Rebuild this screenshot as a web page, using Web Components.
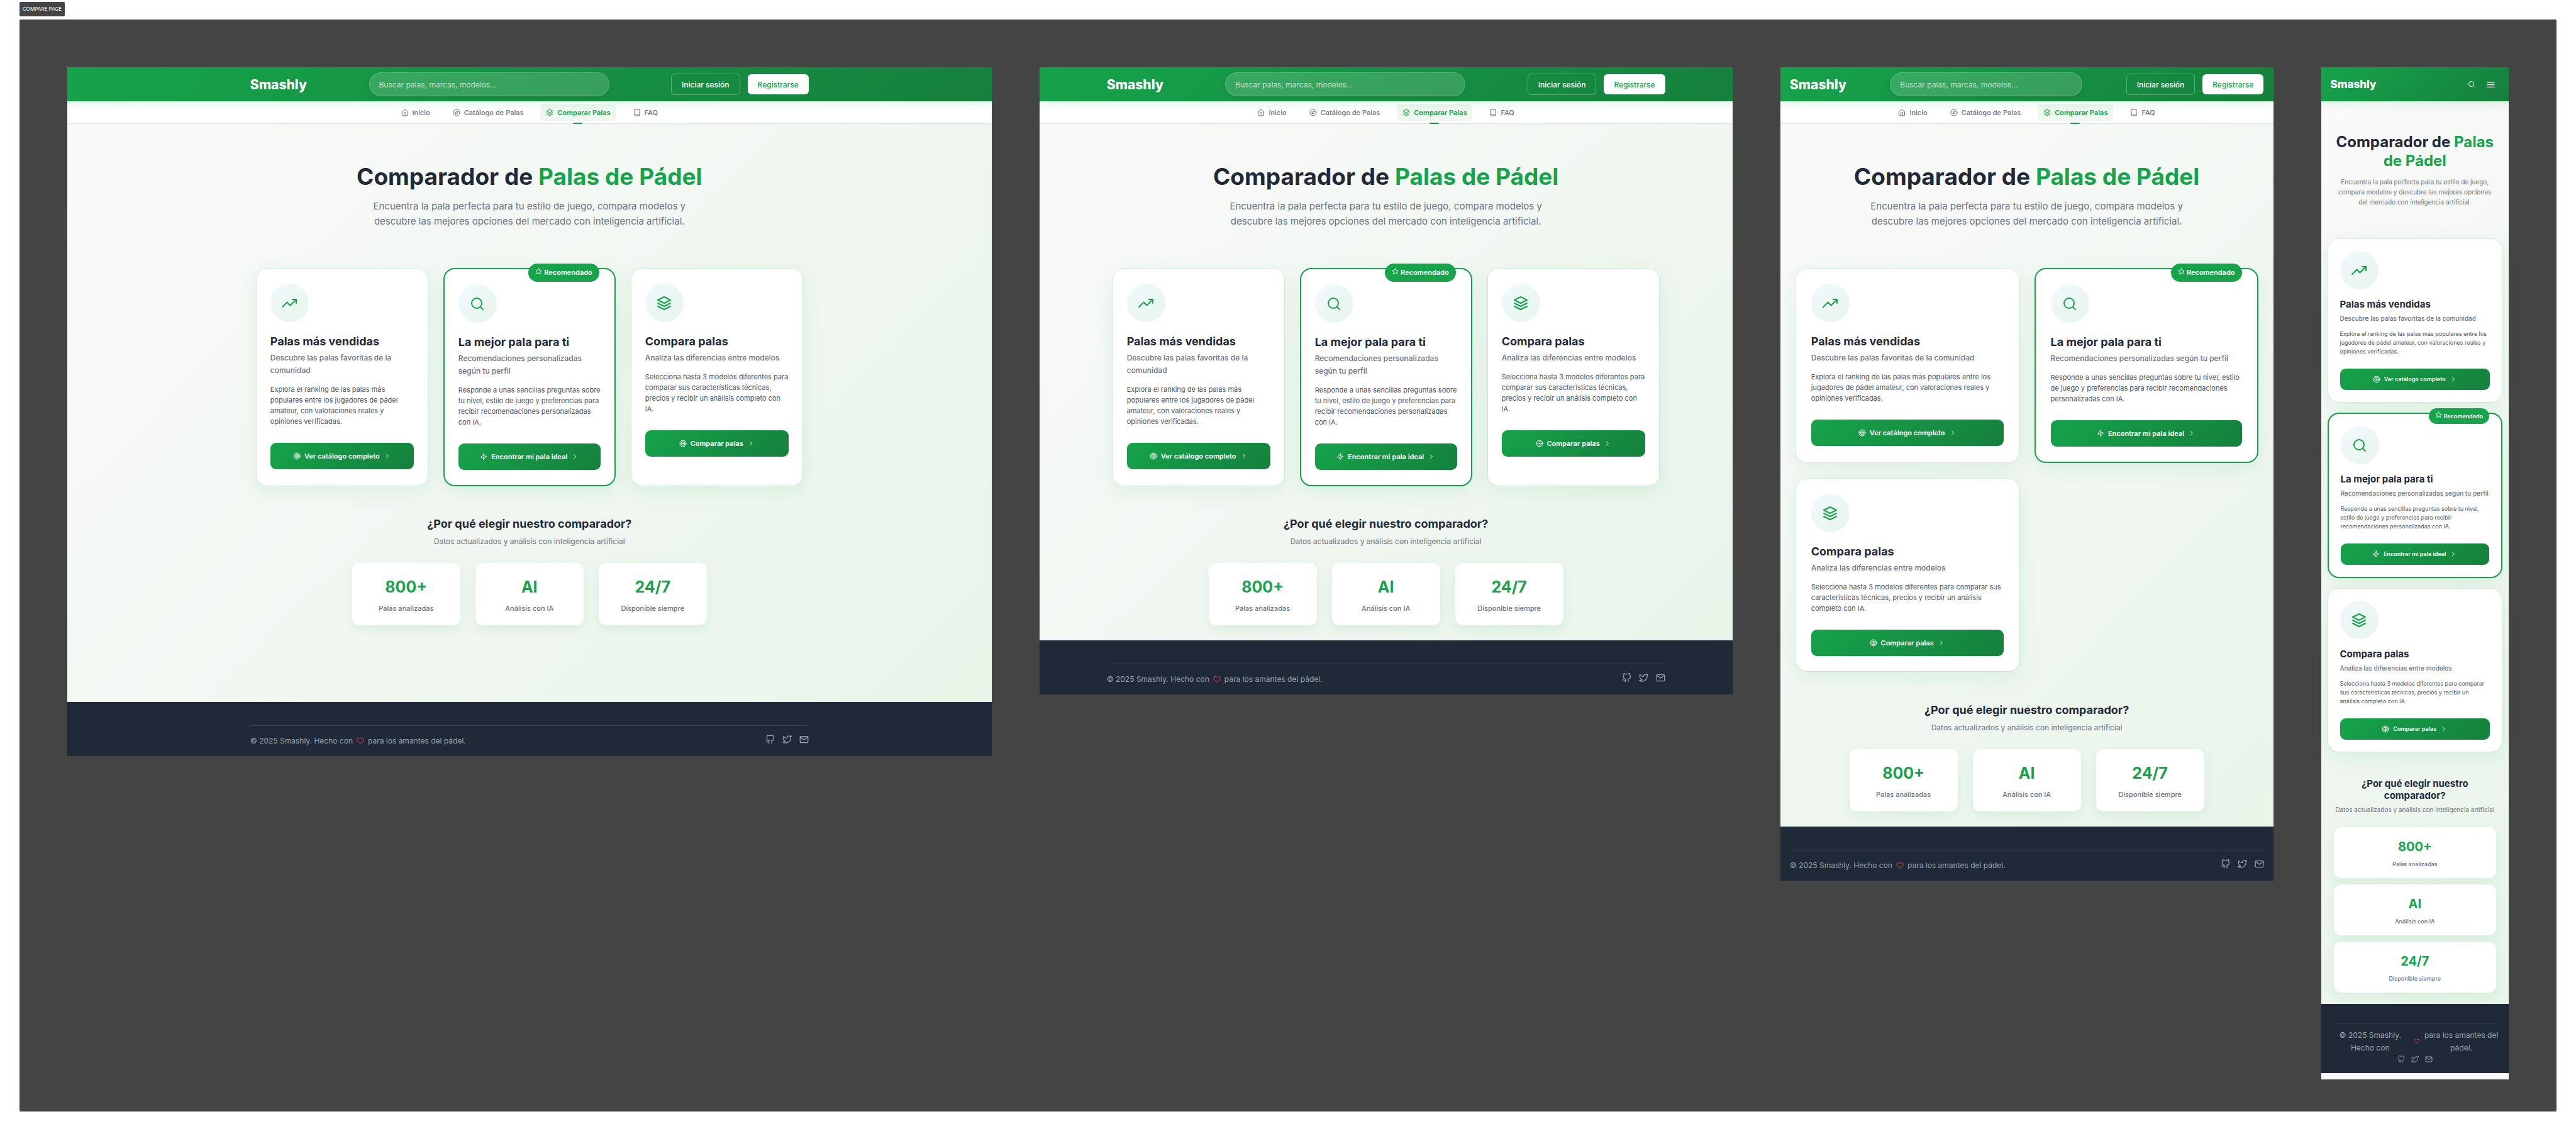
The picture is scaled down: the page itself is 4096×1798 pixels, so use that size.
<!DOCTYPE html>
<html lang="es">
<head>
<meta charset="utf-8">
<title>Smashly · Compare page</title>
<style>
  html { height: 100%; }
  body {
    margin: 0;
    min-height: 100%;
    box-sizing: border-box;
    padding: 3px 31px 31px;
    display: flex;
    flex-direction: column;
    align-items: flex-start;
    gap: 5px;
    background: #fff;
    font-family: Inter, "Liberation Sans", sans-serif;
  }
  compare-board { align-self: stretch; flex: 1; }
  smashly-screen.desktop { flex: 1920 1 0; }
  smashly-screen.laptop { flex: 1440 1 0; }
  smashly-screen.tablet { flex: 1024 1 0; }
  smashly-screen.mobile { flex: 390 1 0; }
</style>
</head>
<body>
<board-label>Compare page</board-label>
<compare-board>
  <smashly-screen class="desktop"></smashly-screen>
  <smashly-screen class="laptop"></smashly-screen>
  <smashly-screen class="tablet"></smashly-screen>
  <smashly-screen class="mobile"></smashly-screen>
</compare-board>

<script>
const define = (name, markup, extra) => {
  const template = document.createElement('template');
  template.innerHTML = markup;
  customElements.define(name, class extends HTMLElement {
    constructor() {
      super();
      this.attachShadow({ mode: 'open' }).append(template.content.cloneNode(true));
    }
    connectedCallback() { if (extra) extra(this, this.shadowRoot); }
  });
};

/* 24×24 stroke icons */
const ICONS = {
  home: '<path d="M3 9l9-7 9 7v11a2 2 0 0 1-2 2H5a2 2 0 0 1-2-2z"/><polyline points="9 22 9 12 15 12 15 22"/>',
  compass: '<circle cx="12" cy="12" r="10"/><polygon points="16.24 7.76 14.12 14.12 7.76 16.24 9.88 9.88 16.24 7.76"/>',
  layers: '<polygon points="12 2 2 7 12 12 22 7 12 2"/><polyline points="2 17 12 22 22 17"/><polyline points="2 12 12 17 22 12"/>',
  book: '<path d="M4 19.5A2.5 2.5 0 0 1 6.5 17H20"/><path d="M6.5 2H20v20H6.5A2.5 2.5 0 0 1 4 19.5v-15A2.5 2.5 0 0 1 6.5 2z"/>',
  search: '<circle cx="11" cy="11" r="8"/><line x1="21" y1="21" x2="16.65" y2="16.65"/>',
  menu: '<line x1="3" y1="12" x2="21" y2="12"/><line x1="3" y1="6" x2="21" y2="6"/><line x1="3" y1="18" x2="21" y2="18"/>',
  trending: '<polyline points="23 6 13.5 15.5 8.5 10.5 1 18"/><polyline points="17 6 23 6 23 12"/>',
  target: '<circle cx="12" cy="12" r="10"/><circle cx="12" cy="12" r="6"/><circle cx="12" cy="12" r="2"/>',
  zap: '<polygon points="13 2 3 14 12 14 11 22 21 10 12 10 13 2"/>',
  star: '<polygon points="12 2 15.09 8.26 22 9.27 17 14.14 18.18 21.02 12 17.77 5.82 21.02 7 14.14 2 9.27 8.91 8.26 12 2"/>',
  chevron: '<polyline points="9 18 15 12 9 6"/>',
  heart: '<path d="M20.84 4.61a5.5 5.5 0 0 0-7.78 0L12 5.67l-1.06-1.06a5.5 5.5 0 0 0-7.78 7.78l1.06 1.06L12 21.23l7.78-7.78 1.06-1.06a5.5 5.5 0 0 0 0-7.78z"/>',
  github: '<path d="M9 19c-5 1.5-5-2.5-7-3m14 6v-3.87a3.37 3.37 0 0 0-.94-2.61c3.14-.35 6.44-1.54 6.44-7A5.44 5.44 0 0 0 20 4.77 5.07 5.07 0 0 0 19.91 1S18.73.65 16 2.48a13.38 13.38 0 0 0-7 0C6.27.65 5.09 1 5.09 1A5.07 5.07 0 0 0 5 4.77a5.44 5.44 0 0 0-1.5 3.78c0 5.42 3.3 6.61 6.44 7A3.37 3.37 0 0 0 9 18.13V22"/>',
  twitter: '<path d="M23 3a10.9 10.9 0 0 1-3.14 1.53 4.48 4.48 0 0 0-7.86 3v1A10.66 10.66 0 0 1 3 4s-4 9 5 13a11.64 11.64 0 0 1-7 2c9 5 20 0 20-11.5a4.5 4.5 0 0 0-.08-.83A7.72 7.72 0 0 0 23 3z"/>',
  mail: '<path d="M4 4h16c1.1 0 2 .9 2 2v12c0 1.1-.9 2-2 2H4c-1.1 0-2-.9-2-2V6c0-1.1.9-2 2-2z"/><polyline points="22,6 12,13 2,6"/>',
};

define('ui-icon', `
<style>
  :host { display: inline-block; width: 12px; min-width: 0; line-height: 0; }
  svg { display: block; width: 100%; height: auto; fill: none; stroke: currentColor; stroke-width: 2; stroke-linecap: round; stroke-linejoin: round; overflow: visible; }
</style>
<svg viewBox="0 0 24 24" aria-hidden="true"></svg>`,
(host, root) => { root.querySelector('svg').innerHTML = ICONS[host.getAttribute('name')] || ''; });

define('board-label', `
<style>
  :host {
    display: block; background: #444; color: #fff; border-radius: 2px;
    padding: 0 5px; font-size: 8px; line-height: 23px; text-transform: uppercase;
  }
</style>
<slot></slot>`);

define('compare-board', `
<style>
  :host {
    display: flex; align-items: flex-start; gap: 76px;
    box-sizing: border-box; padding: 76px; padding-bottom: 51px;
    background: #444; border-radius: 2px;
  }
</style>
<slot></slot>`);

define('smashly-header', `
<style>
  :host {
    display: block; position: relative; z-index: 2; color: #fff;
    background: linear-gradient(135deg, #16a34a 0%, #15803d 100%);
    box-shadow: 0 3px 15px rgba(22, 163, 74, .15);
  }
  .bar {
    box-sizing: border-box; max-width: 918px; height: 54px; margin: 0 auto; padding: 0 15px;
    display: flex; align-items: center; justify-content: space-between;
  }
  .logo { color: inherit; text-decoration: none; font-size: 21px; line-height: 27px; font-weight: 800; }
  input {
    box-sizing: border-box; display: block; width: 382px; height: 38px; margin: 0; padding: 0 15px;
    border: 1px solid rgba(255, 255, 255, .2); border-radius: 19px;
    background: rgba(255, 255, 255, .15); color: #fff; font: 12px/15px Inter, "Liberation Sans", sans-serif;
    box-shadow: 0 2px 8px rgba(0, 0, 0, .1);
  }
  input::placeholder { color: rgba(255, 255, 255, .7); opacity: 1; }
  .actions, .tools { display: flex; align-items: center; gap: 12px; }
  .tools { display: none; gap: 5px; }
  button { margin: 0; border: 0; background: none; color: inherit; font: 500 12px/15px Inter, "Liberation Sans", sans-serif; }
  .actions button { box-sizing: border-box; height: 32px; padding: 0 16px; border-radius: 6px; }
  .actions .ghost { height: 34px; border: 1px solid rgba(255, 255, 255, .3); }
  .actions .solid { background: #fff; color: #16a34a; }
  .tools button { display: flex; padding: 6px; }
  .menu ui-icon { width: 15px; }
  @container (max-width: 900px) { input { width: 306px; } }
  @container (max-width: 500px) {
    form, .actions { display: none; }
    .tools { display: flex; }
    .logo { font-size: 17px; line-height: 21px; }
  }
</style>
<header class="bar">
  <a class="logo" href="#">Smashly</a>
  <form role="search"><input type="search" aria-label="Buscar palas" placeholder="Buscar palas, marcas, modelos..."></form>
  <div class="actions"><button class="ghost" type="button">Iniciar sesión</button><button class="solid" type="button">Registrarse</button></div>
  <div class="tools">
    <button type="button" aria-label="Buscar"><ui-icon name="search"></ui-icon></button>
    <button class="menu" type="button" aria-label="Menú"><ui-icon name="menu"></ui-icon></button>
  </div>
</header>`);

define('smashly-nav', `
<style>
  :host { display: block; position: relative; z-index: 1; background: #fff; border-bottom: 1px solid #e5e7eb; box-shadow: 0 1px 2px rgba(0, 0, 0, .04); }
  nav { display: flex; justify-content: center; gap: 18px; padding: 5px 0 4px; }
  a {
    position: relative; display: flex; align-items: center; gap: 6px; padding: 6px 9px; border-radius: 5px;
    color: #6b7280; text-decoration: none; font-size: 11px; line-height: 14px; font-weight: 500;
  }
  a.active { color: #16a34a; font-weight: 600; background: #eff8f0; }
  a.active::after {
    content: ""; position: absolute; left: 50%; bottom: -5px; width: 15px; height: 2px; margin-left: -8px;
    background: #16a34a; border-radius: 1px;
  }
  @container (max-width: 500px) { :host { display: none; } }
</style>
<nav aria-label="Principal">
  <a href="#"><ui-icon name="home"></ui-icon>Inicio</a>
  <a href="#"><ui-icon name="compass"></ui-icon>Catálogo de Palas</a>
  <a href="#" class="active" aria-current="page"><ui-icon name="layers"></ui-icon>Comparar Palas</a>
  <a href="#"><ui-icon name="book"></ui-icon>FAQ</a>
</nav>`);

define('smashly-hero', `
<style>
  :host { display: block; text-align: center; padding: 62px 24px; }
  h1 { margin: 0; color: #1f2937; font-size: 37px; line-height: 44px; font-weight: 700; }
  h1 em { font-style: normal; color: #16a34a; }
  p { margin: 13px auto 0; max-width: 536px; color: #6b7280; font-size: 15px; line-height: 24px; }
  @container (max-width: 500px) {
    :host { padding: 50px 20px; }
    h1 { font-size: 24px; line-height: 30px; }
    p { margin-top: 10px; font-size: 10px; line-height: 16px; }
  }
</style>
<h1>Comparador de <em>Palas de Pádel</em></h1>
<p>Encuentra la pala perfecta para tu estilo de juego, compara modelos y descubre las mejores opciones del mercado con inteligencia artificial.</p>`);

define('option-card', `
<style>
  :host {
    display: block; position: relative; box-sizing: border-box; min-width: 0; padding: 24px 22px;
    background: #fff; border: 1px solid rgba(22, 163, 74, .1); background-clip: padding-box; border-radius: 18px;
    box-shadow: 0 8px 31px rgba(22, 163, 74, .1);
  }
  :host([featured]) { border: 2px solid #16a34a; }
  .badge {
    display: none; position: absolute; top: -9px; right: 24px; padding: 6px 11px; border-radius: 15px;
    background: #16a34a; color: #fff; font-size: 11px; line-height: 17px; font-weight: 600;
  }
  :host([featured]) .badge { display: block; }
  .badge ui-icon { width: 11px; }
  .disc {
    width: 61px; height: 61px; border-radius: 50%; display: flex; align-items: center; justify-content: center;
    background: linear-gradient(135deg, #f0f9ff, #e8f5e9); color: #16a34a;
  }
  .disc ui-icon { width: 24px; }
  h3 { margin: 20px 0 0; color: #1f2937; font-size: 18px; line-height: 22px; font-weight: 700; }
  .lead { margin: 5px 0 0; color: #6b7280; font-size: 12px; line-height: 20px; font-weight: 500; }
  .text { margin: 12px 0 25px; color: #4b5563; font-size: 11px; line-height: 17px; }
  button {
    display: flex; align-items: center; justify-content: center; gap: 6px; width: 100%; height: 42px; margin: 0; padding: 0;
    border: 0; border-radius: 9px; background: linear-gradient(135deg, #16a34a 0%, #15803d 100%); color: #fff;
    font: 600 11px/17px Inter, "Liberation Sans", sans-serif;
  }
  @container (max-width: 900px) { :host { padding: 24px; } }
  @container (max-width: 500px) {
    :host { padding: 19px; }
    .badge { right: 19px; padding: 5px 10px; font-size: 9px; line-height: 14px; }
    h3 { margin-top: 15px; font-size: 15px; line-height: 18px; }
    .lead { font-size: 10px; line-height: 16px; }
    .text { margin: 10px 0 20px; font-size: 9px; line-height: 14px; }
    button { height: 34px; font-size: 9px; line-height: 14px; }
  }
</style>
<div class="badge"><ui-icon name="star"></ui-icon> Recomendado</div>
<div class="disc"><ui-icon class="symbol"></ui-icon></div>
<h3><slot name="title"></slot></h3>
<p class="lead"><slot name="lead"></slot></p>
<p class="text"><slot></slot></p>
<button type="button"><ui-icon class="action-icon"></ui-icon><slot name="action"></slot><ui-icon name="chevron"></ui-icon></button>`,
(host, root) => {
  for (const [cls, attr] of [['symbol', 'icon'], ['action-icon', 'action-icon']]) {
    const icon = root.querySelector('.' + cls);
    icon.setAttribute('name', host.getAttribute(attr));
    icon.connectedCallback();
  }
});

define('stat-tile', `
<style>
  :host { display: block; padding: 18px; background: #fff; border-radius: 12px; text-align: center; box-shadow: 0 6px 18px rgba(22, 163, 74, .1); }
  .value { color: #16a34a; font-size: 25px; line-height: 40px; font-weight: 700; }
  .label { margin-top: 6px; color: #6b7280; font-size: 11px; line-height: 17px; font-weight: 500; }
  @container (max-width: 500px) {
    :host { padding: 15px; }
    .value { font-size: 20px; line-height: 32px; }
    .label { margin-top: 5px; font-size: 9px; line-height: 14px; }
  }
</style>
<div class="value"><slot name="value"></slot></div>
<div class="label"><slot></slot></div>`);

define('smashly-footer', `
<style>
  :host { display: block; background: #1f2937; color: #9ca3af; font-size: 12px; line-height: 20px; }
  .inner { box-sizing: border-box; max-width: 918px; margin: 0 auto; padding: 37px 15px 0; }
  .row { display: flex; align-items: center; justify-content: space-between; padding: 14px 0; border-top: 1px solid #374151; }
  .copy { display: flex; align-items: center; gap: 6px; }
  .copy ui-icon { color: #ef4444; }
  .links { display: flex; gap: 12px; }
  .links a { color: inherit; height: 20px; }
  .links ui-icon { width: 15px; }
  @container (max-width: 500px) {
    .inner { padding-top: 30px; }
    .row { flex-direction: column; padding: 9px 0 10px; text-align: center; }
    .links { gap: 10px; }
    .links ui-icon { width: 12px; }
  }
</style>
<footer class="inner">
  <div class="row">
    <div class="copy"><span>© 2025 Smashly. Hecho con</span><ui-icon name="heart"></ui-icon><span>para los amantes del pádel.</span></div>
    <div class="links">
      <a href="#" aria-label="GitHub"><ui-icon name="github"></ui-icon></a>
      <a href="#" aria-label="Twitter"><ui-icon name="twitter"></ui-icon></a>
      <a href="#" aria-label="Correo"><ui-icon name="mail"></ui-icon></a>
    </div>
  </div>
</footer>`);

define('smashly-screen', `
<style>
  :host { display: block; min-width: 0; container-type: inline-size; background: #fafafa; }
  main { display: block; box-sizing: border-box; padding-bottom: 24px; background: linear-gradient(135deg, #fafafa 0%, #e8f5e9 100%); }
  .cards {
    box-sizing: border-box; max-width: 918px; margin: 0 auto; padding: 0 24px;
    display: grid; grid-template-columns: repeat(3, minmax(0, 1fr)); gap: 24px;
  }
  .why { padding: 48px 24px 0; text-align: center; }
  h2 { margin: 0; color: #1f2937; font-size: 18px; line-height: 24px; font-weight: 700; }
  .why p { margin: 6px 0 24px; color: #6b7280; font-size: 12px; line-height: 20px; }
  .stats { max-width: 564px; margin: 0 auto; display: grid; grid-template-columns: repeat(3, minmax(0, 1fr)); gap: 24px; }
  @container (min-width: 1400px) { main { min-height: 919px; } }
  @container (max-width: 900px) {
    .cards { grid-template-columns: repeat(2, minmax(0, 1fr)); }
    .why { padding-top: 49px; }
  }
  @container (max-width: 500px) {
    main { padding-bottom: 18px; }
    .cards { grid-template-columns: minmax(0, 1fr); padding: 0 10px; gap: 16px; }
    .why { padding: 40px 20px 0; }
    h2 { font-size: 15px; line-height: 19px; }
    .why p { margin: 5px 0 20px; font-size: 10px; line-height: 16px; }
    .stats { grid-template-columns: minmax(0, 1fr); gap: 10px; }
    smashly-footer { margin-bottom: 10px; }
  }
</style>
<smashly-header></smashly-header>
<smashly-nav></smashly-nav>
<main>
  <smashly-hero></smashly-hero>
  <section class="cards">
    <option-card icon="trending" action-icon="target">
      <span slot="title">Palas más vendidas</span>
      <span slot="lead">Descubre las palas favoritas de la comunidad</span>
      Explora el ranking de las palas más populares entre los jugadores de pádel amateur, con valoraciones reales y opiniones verificadas.
      <span slot="action">Ver catálogo completo</span>
    </option-card>
    <option-card featured icon="search" action-icon="zap">
      <span slot="title">La mejor pala para ti</span>
      <span slot="lead">Recomendaciones personalizadas según tu perfil</span>
      Responde a unas sencillas preguntas sobre tu nivel, estilo de juego y preferencias para recibir recomendaciones personalizadas con IA.
      <span slot="action">Encontrar mi pala ideal</span>
    </option-card>
    <option-card icon="layers" action-icon="target">
      <span slot="title">Compara palas</span>
      <span slot="lead">Analiza las diferencias entre modelos</span>
      Selecciona hasta 3 modelos diferentes para comparar sus características técnicas, precios y recibir un análisis completo con IA.
      <span slot="action">Comparar palas</span>
    </option-card>
  </section>
  <section class="why">
    <h2>¿Por qué elegir nuestro comparador?</h2>
    <p>Datos actualizados y análisis con inteligencia artificial</p>
    <div class="stats">
      <stat-tile><span slot="value">800+</span>Palas analizadas</stat-tile>
      <stat-tile><span slot="value">AI</span>Análisis con IA</stat-tile>
      <stat-tile><span slot="value">24/7</span>Disponible siempre</stat-tile>
    </div>
  </section>
</main>
<smashly-footer></smashly-footer>`);
</script>
</body>
</html>
